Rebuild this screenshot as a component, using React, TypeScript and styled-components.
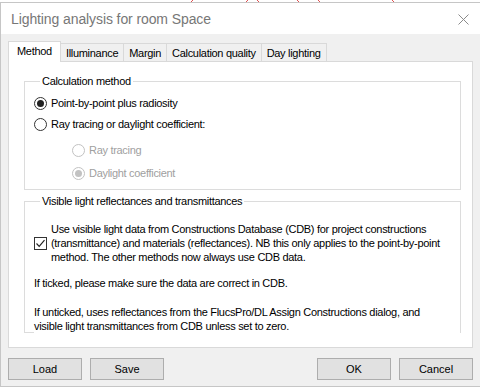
import React from "react";
import styled, { createGlobalStyle } from "styled-components";

const GlobalStyle = createGlobalStyle`
  html, body {
    margin: 0;
    padding: 0;
    background: #ffffff;
    overflow: hidden;
  }
  body {
    font-family: "Liberation Sans", Arial, sans-serif;
    font-size: 11px;
    color: #000;
  }
`;

const tabs = ["Method", "Illuminance", "Margin", "Calculation quality", "Day lighting"];

const App = () => {
  return (
    <>
      <GlobalStyle />
      <Backdrop>
        <svg width="480" height="3" viewBox="0 0 480 3">
          <g stroke="#e05050" strokeWidth="1" fill="none">
            <path d="M191 3 L194 0" />
            <path d="M246 3 L249 0" />
            <path d="M256 0 L259 3" />
            <path d="M296 0 L299 3" />
            <path d="M317 0 L320 3" />
            <path d="M391 0 L394 3" />
          </g>
        </svg>
      </Backdrop>
      <Window>
        <TitleBar>
          <Title>Lighting analysis for room Space</Title>
          <CloseIcon width="11" height="11" viewBox="0 0 11 11">
            <path d="M0.5 0.5 L10.5 10.5 M10.5 0.5 L0.5 10.5" stroke="#8a8a8a" strokeWidth="1" />
          </CloseIcon>
        </TitleBar>
        <Body>
          <TabStrip>
            {tabs.map((t, i) => (
              <Tab key={t} $active={i === 0}>
                {t}
              </Tab>
            ))}
          </TabStrip>
          <Panel>
            <Group>
              <Legend>Calculation method</Legend>
              <RadioRow $indent={0} $gap={0}>
                <Radio $checked />
                <Label>Point-by-point plus radiosity</Label>
              </RadioRow>
              <RadioRow $indent={0} $gap={7}>
                <Radio />
                <Label>Ray tracing or daylight coefficient:</Label>
              </RadioRow>
              <RadioRow $indent={38} $gap={12}>
                <Radio $disabled />
                <Label $disabled>Ray tracing</Label>
              </RadioRow>
              <RadioRow $indent={38} $gap={9}>
                <Radio $checked $disabled />
                <Label $disabled>Daylight coefficient</Label>
              </RadioRow>
            </Group>
            <OpenGroup>
              <Legend>Visible light reflectances and transmittances</Legend>
              <CheckRow>
                <CheckBox>
                  <svg width="11" height="11" viewBox="0 0 11 11">
                    <path d="M1.5 5.5 L4.2 8.3 L9.5 2.2" stroke="#222" strokeWidth="1.2" fill="none" />
                  </svg>
                </CheckBox>
                <Label>
                  Use visible light data from Constructions Database (CDB) for project constructions
                  <br />
                  (transmittance) and materials (reflectances). NB this only applies to the point-by-point
                  <br />
                  method. The other methods now always use CDB data.
                </Label>
              </CheckRow>
              <Note $gap={12}>If ticked, please make sure the data are correct in CDB.</Note>
              <Note $gap={15}>
                If unticked, uses reflectances from the FlucsPro/DL Assign Constructions dialog, and
                <br />
                visible light transmittances from CDB unless set to zero.
              </Note>
            </OpenGroup>
          </Panel>
          <ButtonBar>
            <ButtonGroup>
              <Button>Load</Button>
              <Button>Save</Button>
            </ButtonGroup>
            <ButtonGroup>
              <Button>OK</Button>
              <Button>Cancel</Button>
            </ButtonGroup>
          </ButtonBar>
        </Body>
      </Window>
    </>
  );
};

const Backdrop = styled.div`
  height: 2px;
  overflow: visible;
  position: relative;
  svg {
    display: block;
    position: absolute;
    top: -1px;
    left: 0;
  }
`;

const Window = styled.div`
  width: 480px;
  box-sizing: border-box;
  border: 1px solid #c6c6c6;
  border-right: none;
  background: #f0f0f0;
`;

const TitleBar = styled.div`
  height: 31px;
  background: #ffffff;
  display: flex;
  align-items: center;
  justify-content: space-between;
  padding: 0 11px 0 10px;
`;

const Title = styled.div`
  font-size: 14px;
  color: #777;
  letter-spacing: -0.1px;
`;

const CloseIcon = styled.svg`
  display: block;
  margin-top: 1px;
`;

const Body = styled.div`
  height: 352px;
  box-sizing: border-box;
  padding: 7px 7px 0 7px;
  display: flex;
  flex-direction: column;
`;

const TabStrip = styled.div`
  display: flex;
  align-items: flex-end;
  height: 20px;
  position: relative;
  z-index: 1;
`;

const Tab = styled.div<{ $active?: boolean }>`
  box-sizing: border-box;
  height: ${(p) => (p.$active ? "21px" : "18px")};
  margin-bottom: ${(p) => (p.$active ? "-1px" : "0")};
  margin-left: ${(p) => (p.$active ? "0" : "-1px")};
  padding: ${(p) => (p.$active ? "0 8px" : "0 5px")};
  background: ${(p) => (p.$active ? "#ffffff" : "#f0f0f0")};
  border: 1px solid #d9d9d9;
  border-bottom: none;
  display: flex;
  align-items: center;
  padding-bottom: ${(p) => (p.$active ? "2px" : "0")};
  letter-spacing: -0.3px;
  white-space: nowrap;
  &:first-child {
    margin-left: 0;
  }
`;

const Panel = styled.div`
  height: 287px;
  box-sizing: border-box;
  background: #ffffff;
  border: 1px solid #d9d9d9;
  padding: 13px 11px 0 15px;
  overflow: hidden;
`;

const Group = styled.fieldset`
  margin: 0;
  border: 1px solid #dcdcdc;
  padding: 8px 0 9px 9px;
  min-width: 0;
`;

const OpenGroup = styled(Group)`
  margin-top: 5px;
  padding: 14px 0 0 9px;
  height: 138px;
  box-sizing: border-box;
  border-bottom: none;
  position: relative;
  &::after {
    content: "";
    position: absolute;
    left: -1px;
    bottom: 0;
    width: 10px;
    border-bottom: 1px solid #dcdcdc;
  }
`;

const Legend = styled.legend`
  padding: 0 2px;
  margin-left: 6px;
  line-height: 13px;
  letter-spacing: -0.3px;
`;

const RadioRow = styled.div<{ $indent: number; $gap: number }>`
  display: flex;
  align-items: center;
  gap: 4px;
  height: 14px;
  margin-left: ${(p) => p.$indent}px;
  margin-top: ${(p) => p.$gap}px;
`;

const Radio = styled.span<{ $checked?: boolean; $disabled?: boolean }>`
  width: 13px;
  height: 13px;
  box-sizing: border-box;
  border-radius: 50%;
  border: 1px solid ${(p) => (p.$disabled ? "#c2c2c2" : "#333")};
  background: #fff;
  display: flex;
  align-items: center;
  justify-content: center;
  flex: none;
  &::after {
    content: "";
    width: 7px;
    height: 7px;
    border-radius: 50%;
    background: ${(p) => (p.$disabled ? "#c2c2c2" : "#222")};
    display: ${(p) => (p.$checked ? "block" : "none")};
  }
`;

const Label = styled.span<{ $disabled?: boolean }>`
  line-height: 14px;
  letter-spacing: -0.3px;
  color: ${(p) => (p.$disabled ? "#a0a0a0" : "#000")};
  white-space: nowrap;
`;

const CheckRow = styled.div`
  display: flex;
  align-items: center;
  gap: 4px;
`;

const CheckBox = styled.span`
  width: 13px;
  height: 13px;
  box-sizing: border-box;
  border: 1px solid #333;
  background: #fff;
  display: flex;
  align-items: center;
  justify-content: center;
  flex: none;
  svg {
    display: block;
  }
`;

const Note = styled.div<{ $gap: number }>`
  margin-top: ${(p) => p.$gap}px;
  line-height: 14px;
  letter-spacing: -0.3px;
  white-space: nowrap;
`;

const ButtonBar = styled.div`
  display: flex;
  justify-content: space-between;
  margin-top: 10px;
  padding-right: 0;
`;

const ButtonGroup = styled.div`
  display: flex;
  gap: 8px;
`;

const Button = styled.button`
  width: 74px;
  height: 22px;
  box-sizing: border-box;
  background: #e1e1e1;
  border: 1px solid #adadad;
  border-radius: 0;
  font-family: "Liberation Sans", Arial, sans-serif;
  font-size: 11px;
  color: #000;
  padding: 0;
`;

export default App;
